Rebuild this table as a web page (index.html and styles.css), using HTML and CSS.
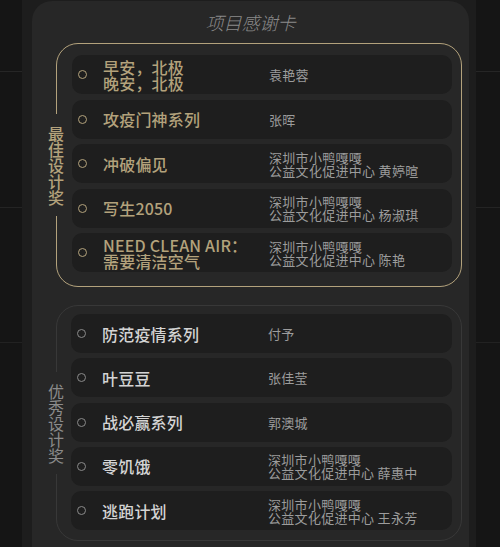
FILE: index.html
```html
<!DOCTYPE html>
<html lang="zh-CN">
<head>
<meta charset="utf-8">
<title>项目感谢卡</title>
<link rel="stylesheet" href="styles.css">
</head>
<body>
<div class="back">
  <div class="panel">
    <h1 class="title">项目感谢卡</h1>

    <section class="frame frame-gold">
      <div class="label">最佳设计奖</div>
      <div class="rows">
        <div class="row"><span class="dot"></span><div class="name">早安，北极<br>晚安，北极</div><div class="who">袁艳蓉</div></div>
        <div class="row"><span class="dot"></span><div class="name">攻疫门神系列</div><div class="who">张晖</div></div>
        <div class="row"><span class="dot"></span><div class="name">冲破偏见</div><div class="who">深圳市小鸭嘎嘎<br>公益文化促进中心 黄婷暄</div></div>
        <div class="row"><span class="dot"></span><div class="name">写生2050</div><div class="who">深圳市小鸭嘎嘎<br>公益文化促进中心 杨淑琪</div></div>
        <div class="row"><span class="dot"></span><div class="name">NEED CLEAN AIR：<br>需要清洁空气</div><div class="who">深圳市小鸭嘎嘎<br>公益文化促进中心 陈艳</div></div>
      </div>
    </section>

    <section class="frame frame-gray">
      <div class="label">优秀设计奖</div>
      <div class="rows">
        <div class="row"><span class="dot"></span><div class="name">防范疫情系列</div><div class="who">付予</div></div>
        <div class="row"><span class="dot"></span><div class="name">叶豆豆</div><div class="who">张佳莹</div></div>
        <div class="row"><span class="dot"></span><div class="name">战必赢系列</div><div class="who">郭澳城</div></div>
        <div class="row"><span class="dot"></span><div class="name">零饥饿</div><div class="who">深圳市小鸭嘎嘎<br>公益文化促进中心 薛惠中</div></div>
        <div class="row"><span class="dot"></span><div class="name">逃跑计划</div><div class="who">深圳市小鸭嘎嘎<br>公益文化促进中心 王永芳</div></div>
      </div>
    </section>
  </div>
</div>
</body>
</html>
```

FILE: styles.css
```css
* { box-sizing: border-box; }

html, body {
  margin: 0;
  height: 547px;
  overflow: hidden;
}

body {
  background-color: #151515;
  background-image:
    linear-gradient(to bottom, transparent 71px, #262626 71px, #262626 72px, transparent 72px),
    linear-gradient(to bottom, transparent 207px, #242424 207px, #242424 208px, transparent 208px),
    linear-gradient(to bottom, transparent 342px, #222 342px, #222 343px, transparent 343px);
  font-family: "Noto Sans CJK SC", "Noto Sans", sans-serif;
}

.back {
  margin-left: 22px;
  width: 454px;
  height: 547px;
  background: #1d1d1d;
  padding-top: 1px;
}

.panel {
  margin-left: 10px;
  width: 437px;
  height: 546px;
  background: #272727;
  border-radius: 20px 20px 0 0;
  overflow: hidden;
}

.title {
  margin: 0;
  height: 42px;
  line-height: 42px;
  text-align: center;
  font-size: 18px;
  font-weight: 300;
  font-style: italic;
  color: #8a8a8a;
}

.frame {
  position: relative;
  margin-left: 24px;
  width: 406px;
  border: 1px solid #b3a27c;
  border-radius: 22px;
  padding: 11px 9px 14px 15px;
}

.frame-gray {
  margin-top: 18px;
  border-color: #383838;
  padding: 8px 9px 10px 14px;
}

.label {
  position: absolute;
  left: -10px;
  top: 50%;
  transform: translateY(-50%);
  width: 18px;
  padding: 11px 0;
  background: #272727;
  font-size: 16px;
  line-height: 16px;
  font-weight: 500;
  text-align: center;
  color: #b3a27c;
}

.frame-gray .label {
  color: #8b8b8b;
  font-weight: 400;
}

.rows {
  display: flex;
  flex-direction: column;
  gap: 5.5px;
}

.frame-gray .rows { gap: 5.25px; }

.row {
  display: flex;
  align-items: center;
  height: 39px;
  background: #1e1e1e;
  border-radius: 10px;
  padding-left: 6px;
}

.dot {
  flex: none;
  width: 9px;
  height: 9px;
  border: 1.5px solid #b3a27c;
  border-radius: 50%;
  margin-right: 16px;
}

.frame-gray .dot { border-color: #8a8a8a; }

.name {
  flex: none;
  width: 166px;
  font-size: 16px;
  line-height: 16px;
  font-weight: 500;
  letter-spacing: 0.2px;
  color: #b3a27c;
}

.frame-gray .name { color: #d4d4d4; }

.who {
  font-size: 13px;
  line-height: 13px;
  letter-spacing: 0.3px;
  color: #9c9c9c;
}
```
